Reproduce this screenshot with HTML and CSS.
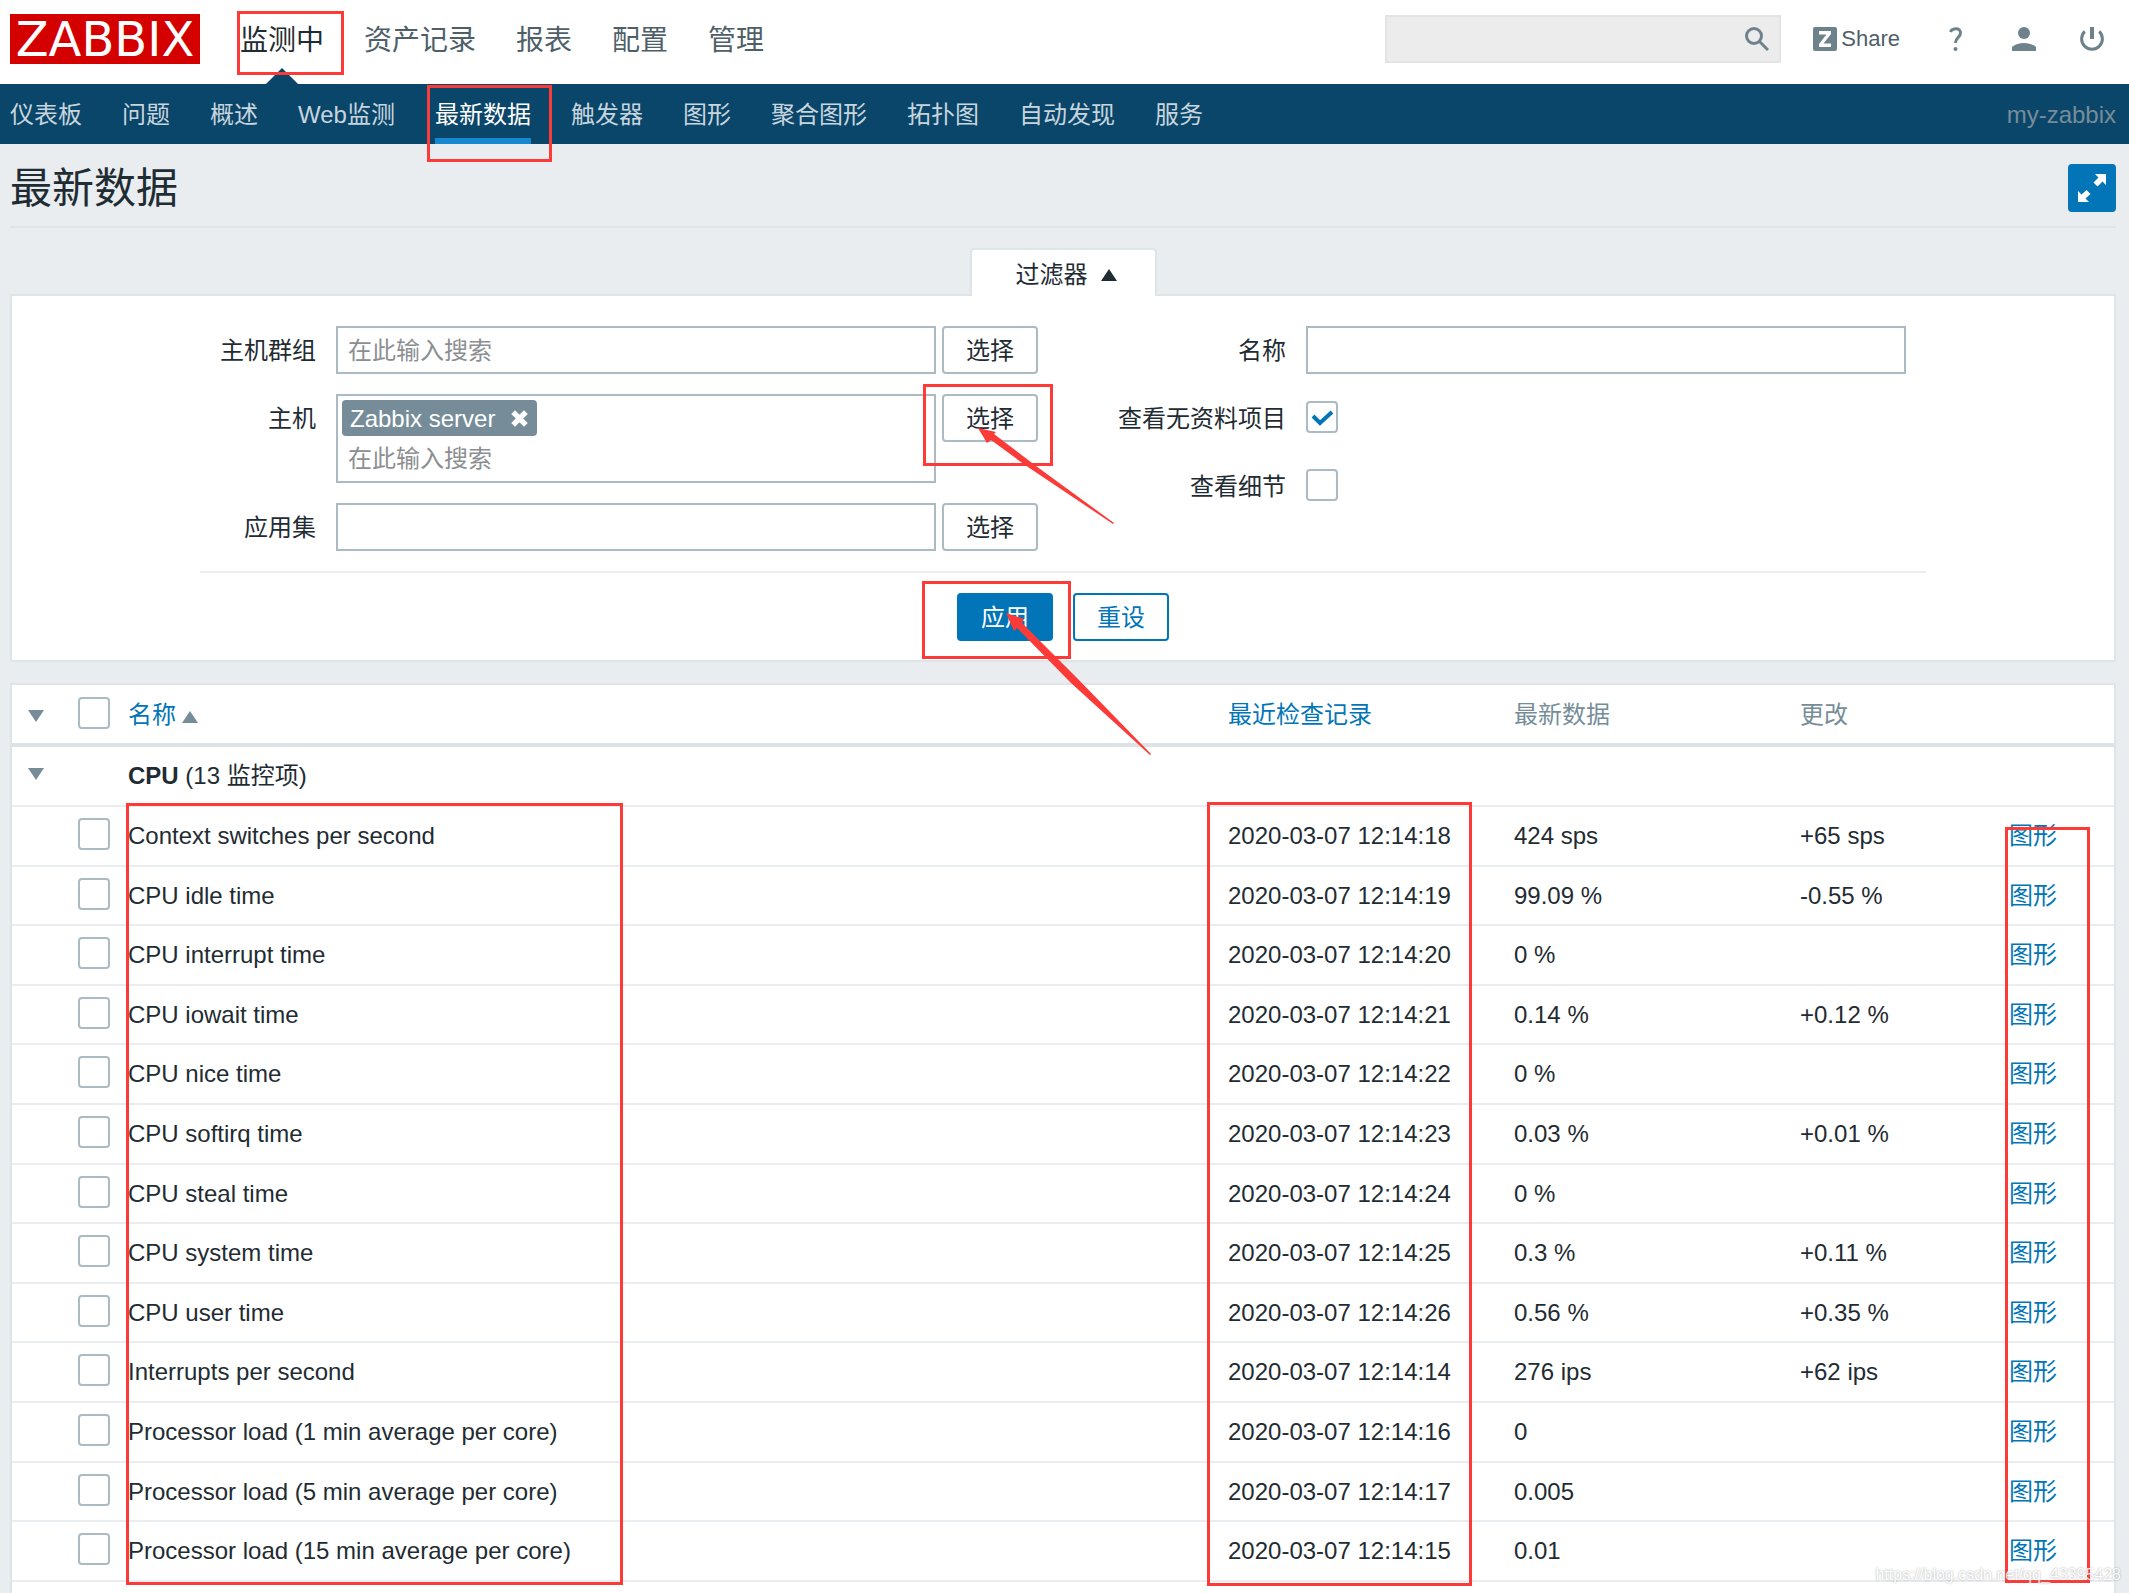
FILE: index.html
```html
<!DOCTYPE html>
<html lang="zh-CN">
<head>
<meta charset="utf-8">
<title>my-zabbix: 最新数据</title>
<link rel="stylesheet" href="styles.css">
</head>
<body>
<header class="top">
  <a class="logo" href="#">ZABBIX</a>
  <nav class="main-menu">
    <a class="active" href="#">监测中</a>
    <a href="#">资产记录</a>
    <a href="#">报表</a>
    <a href="#">配置</a>
    <a href="#">管理</a>
  </nav>
  <form class="search">
    <input type="text" aria-label="搜索">
    <button type="button" aria-label="搜索">
      <svg width="24" height="24" viewBox="0 0 24 24" fill="none" stroke="#6e828c" stroke-width="3"><circle cx="9" cy="9" r="7.5"/><path d="M14 14l9 9"/></svg>
    </button>
  </form>
  <div class="user-menu">
    <a class="share" href="#"><svg width="24" height="24" viewBox="0 0 24 24"><rect width="24" height="24" rx="2" fill="#6e828c"/><path d="M6 4h12v3L10.500 16.500H18V20H6v-3l7.500-9.500H6z" fill="#fff"/></svg>Share</a>
    <a href="#" aria-label="帮助"><svg width="24" height="24" viewBox="0 0 24 24"><path d="M6.500 5C7.500 1.500 16.500-.5 16.500 6c0 4.500-5 4.500-5 10" fill="none" stroke="#6e828c" stroke-width="3"/><circle cx="11.500" cy="22" r="2" fill="#6e828c"/></svg></a>
    <a href="#" aria-label="用户"><svg width="24" height="24" viewBox="0 0 24 24" fill="#6e828c"><circle cx="12" cy="6" r="6"/><path d="M0 24v-4c6-5.500 18-5.500 24 0v4z"/></svg></a>
    <a href="#" aria-label="退出"><svg width="24" height="24" viewBox="0 0 24 24" fill="none" stroke="#6e828c"><path d="M4.800 4.300a10.400 10.400 0 1 0 14.400 0" stroke-width="3"/><path d="M12 0v12" stroke-width="4"/></svg></a>
  </div>
</header>
<nav class="sub-menu">
  <a href="#">仪表板</a>
  <a href="#">问题</a>
  <a href="#">概述</a>
  <a href="#">Web监测</a>
  <a class="active" href="#">最新数据</a>
  <a href="#">触发器</a>
  <a href="#">图形</a>
  <a href="#">聚合图形</a>
  <a href="#">拓扑图</a>
  <a href="#">自动发现</a>
  <a href="#">服务</a>
  <span class="server-name">my-zabbix</span>
</nav>
<main class="page">
  <div class="title-row">
    <h1>最新数据</h1>
    <button class="fullscreen" type="button" aria-label="全屏">
      <svg width="28" height="28" viewBox="0 0 28 28" fill="#fff"><path d="M17 0h11v11l-3.500-3.500-5 5-4-4 5-5zM0 17l3.500 3.500 5-4.500 4 4-5 4.500L11 28H0z"/></svg>
    </button>
  </div>
  <button class="filter-tab" type="button">过滤器<span class="tri up dark"></span></button>
  <form class="filter">
    <div class="filter-form">
      <div class="fields-left">
        <label for="groups">主机群组</label>
        <input class="box" id="groups" type="text" placeholder="在此输入搜索">
        <button class="btn" type="button">选择</button>
        <label for="hosts">主机</label>
        <div class="box multi">
          <span class="chip">Zabbix server<button type="button" aria-label="删除"><svg width="17" height="17" viewBox="0 0 16 16" stroke="#fff" stroke-width="5"><path d="M2 2l12 12M14 2L2 14"/></svg></button></span>
          <input id="hosts" type="text" placeholder="在此输入搜索">
        </div>
        <button class="btn" type="button">选择</button>
        <label for="app">应用集</label>
        <input class="box" id="app" type="text">
        <button class="btn" type="button">选择</button>
      </div>
      <div class="fields-right">
        <label for="name">名称</label>
        <input class="box" id="name" type="text">
        <label for="nodata">查看无资料项目</label>
        <input id="nodata" type="checkbox" checked>
        <label for="details">查看细节</label>
        <input id="details" type="checkbox">
      </div>
    </div>
    <div class="filter-actions">
      <button class="btn primary" type="button">应用</button>
      <button class="btn outline" type="button">重设</button>
    </div>
  </form>
  <div class="panel">
    <table>
      <colgroup><col class="c-toggle"><col class="c-check"><col><col class="c-data"><col class="c-data"><col class="c-change"><col class="c-link"></colgroup>
      <thead>
        <tr><th><button class="toggle" type="button" aria-label="全部折叠"><span class="tri down"></span></button></th><th><input type="checkbox" aria-label="全选"></th><th><a href="#">名称<span class="tri up"></span></a></th><th><a href="#">最近检查记录</a></th><th>最新数据</th><th>更改</th><th></th></tr>
      </thead>
      <tbody>
        <tr><td><button class="toggle" type="button" aria-label="折叠"><span class="tri down"></span></button></td><td></td><td colspan="5"><b>CPU</b> (13 监控项)</td></tr>
        <tr><td></td><td><input type="checkbox" aria-label="Context switches per second"></td><td>Context switches per second</td><td>2020-03-07 12:14:18</td><td>424 sps</td><td>+65 sps</td><td><a href="#">图形</a></td></tr>
        <tr><td></td><td><input type="checkbox" aria-label="CPU idle time"></td><td>CPU idle time</td><td>2020-03-07 12:14:19</td><td>99.09 %</td><td>-0.55 %</td><td><a href="#">图形</a></td></tr>
        <tr><td></td><td><input type="checkbox" aria-label="CPU interrupt time"></td><td>CPU interrupt time</td><td>2020-03-07 12:14:20</td><td>0 %</td><td></td><td><a href="#">图形</a></td></tr>
        <tr><td></td><td><input type="checkbox" aria-label="CPU iowait time"></td><td>CPU iowait time</td><td>2020-03-07 12:14:21</td><td>0.14 %</td><td>+0.12 %</td><td><a href="#">图形</a></td></tr>
        <tr><td></td><td><input type="checkbox" aria-label="CPU nice time"></td><td>CPU nice time</td><td>2020-03-07 12:14:22</td><td>0 %</td><td></td><td><a href="#">图形</a></td></tr>
        <tr><td></td><td><input type="checkbox" aria-label="CPU softirq time"></td><td>CPU softirq time</td><td>2020-03-07 12:14:23</td><td>0.03 %</td><td>+0.01 %</td><td><a href="#">图形</a></td></tr>
        <tr><td></td><td><input type="checkbox" aria-label="CPU steal time"></td><td>CPU steal time</td><td>2020-03-07 12:14:24</td><td>0 %</td><td></td><td><a href="#">图形</a></td></tr>
        <tr><td></td><td><input type="checkbox" aria-label="CPU system time"></td><td>CPU system time</td><td>2020-03-07 12:14:25</td><td>0.3 %</td><td>+0.11 %</td><td><a href="#">图形</a></td></tr>
        <tr><td></td><td><input type="checkbox" aria-label="CPU user time"></td><td>CPU user time</td><td>2020-03-07 12:14:26</td><td>0.56 %</td><td>+0.35 %</td><td><a href="#">图形</a></td></tr>
        <tr><td></td><td><input type="checkbox" aria-label="Interrupts per second"></td><td>Interrupts per second</td><td>2020-03-07 12:14:14</td><td>276 ips</td><td>+62 ips</td><td><a href="#">图形</a></td></tr>
        <tr><td></td><td><input type="checkbox" aria-label="Processor load (1 min average per core)"></td><td>Processor load (1 min average per core)</td><td>2020-03-07 12:14:16</td><td>0</td><td></td><td><a href="#">图形</a></td></tr>
        <tr><td></td><td><input type="checkbox" aria-label="Processor load (5 min average per core)"></td><td>Processor load (5 min average per core)</td><td>2020-03-07 12:14:17</td><td>0.005</td><td></td><td><a href="#">图形</a></td></tr>
        <tr><td></td><td><input type="checkbox" aria-label="Processor load (15 min average per core)"></td><td>Processor load (15 min average per core)</td><td>2020-03-07 12:14:15</td><td>0.01</td><td></td><td><a href="#">图形</a></td></tr>
      </tbody>
    </table>
  </div>
</main>
<div class="mark mark-menu"></div>
<div class="mark mark-submenu"></div>
<div class="mark mark-select"></div>
<div class="mark mark-apply"></div>
<div class="mark mark-names"></div>
<div class="mark mark-times"></div>
<div class="mark mark-graphs"></div>
<svg class="arrows" width="182" height="336" viewBox="0 0 182 336" fill="#fc3a38"><path d="M8 8L26 12L24 14L66 46L144 103L143 104L55 45L21 20L17 23z"/><path d="M36 193L54 199L52 203L107 258L181 334L180 335L101 263L47 208L44 211z"/></svg>
<div class="watermark">https://blog.csdn.net/qq_43395428</div>
</body>
</html>
```
FILE: styles.css
```css
* { box-sizing: border-box; }

body {
  margin: 0;
  position: relative;
  display: flex;
  flex-direction: column;
  min-height: 100vh;
  overflow-x: hidden;
  background: #e9edf0;
  color: #1f2c33;
  font: 24px/32px "Liberation Sans", "Noto Sans CJK SC", sans-serif;
}

a { color: #0275b8; text-decoration: none; }
button, input { font: inherit; color: inherit; margin: 0; }
button { cursor: pointer; }
svg { display: block; }

/* Header */
.top {
  display: flex;
  align-items: center;
  height: 84px;
  padding: 0 25px 6px 10px;
  background: #fff;
}
.logo {
  width: 190px;
  height: 50px;
  background: #d40000;
  color: #fff;
  font: 48px/50px "DejaVu Sans", sans-serif;
  text-align: center;
}
.main-menu { display: flex; gap: 40px; margin-left: 40px; font-size: 28px; line-height: 78px; }
.main-menu a { height: 78px; padding-top: 2px; color: #4f5f69; }
.main-menu .active { position: relative; color: #1f2c33; }
.main-menu .active::after {
  content: "";
  position: absolute;
  left: 50%;
  bottom: -6px;
  transform: translateX(-50%);
  border: 16px solid transparent;
  border-top: 0;
  border-bottom-color: #0a466a;
}
.search { display: flex; width: 396px; height: 48px; margin-left: auto; background: #ececec; border: 2px solid #e4e4e4; }
.search input { flex: 1; min-width: 0; border: 0; background: none; }
.search button { padding: 0 10px; border: 0; background: none; }
.user-menu { display: flex; align-items: center; gap: 44px; margin-left: 32px; font-size: 22px; }
.share { display: flex; gap: 4px; align-items: center; line-height: 24px; color: #4f5f69; }

.sub-menu { display: flex; gap: 40px; height: 60px; padding: 0 13px 0 10px; background: #0a466a; line-height: 62px; }
.sub-menu a { color: #c7d5de; }
.sub-menu .active { color: #fff; box-shadow: inset 0 -6px #1688cf; }
.server-name { margin-left: auto; color: #768d99; }

/* Page */
.page { flex: 1; display: flex; flex-direction: column; padding: 0 13px 0 10px; }
.title-row {
  display: flex;
  align-items: flex-start;
  justify-content: space-between;
  height: 84px;
  padding-top: 20px;
  margin-bottom: 20px;
  border-bottom: 2px solid #dfe4e7;
}
h1 { margin: 0; font-size: 42px; font-weight: 400; line-height: 50px; }
.fullscreen { display: grid; place-items: center; width: 48px; height: 48px; padding: 0; border: 0; border-radius: 4px; background: #0275b8; }

.filter-tab {
  display: flex;
  align-items: center;
  gap: 13px;
  align-self: center;
  height: 48px;
  padding: 4px 38px 0 44px;
  margin-bottom: -2px;
  border: 2px solid #dfe4e7;
  border-bottom: 0;
  border-radius: 4px 4px 0 0;
  background: #fff;
  z-index: 1;
}
.tri { display: inline-block; border: 8px solid transparent; color: #768d99; }
.tri.up { border-top: 0; border-bottom: 12px solid; }
.tri.down { border-bottom: 0; border-top: 12px solid; }
.tri.dark { color: #1f2c33; }

.filter { padding: 30px 20px 19px; border: 2px solid #dfe4e7; background: #fff; }
.filter-form {
  display: grid;
  grid-template-columns: 838fr 888fr;
  max-width: 1726px;
  margin: 0 auto;
  padding-bottom: 20px;
  border-bottom: 2px solid #e9edf0;
}
.fields-left, .fields-right { display: grid; row-gap: 20px; align-items: start; align-content: start; }
.fields-left { grid-template-columns: 116px 1fr 96px; }
.fields-right { grid-template-columns: 248px 1fr; padding-right: 20px; }
.filter label { height: 48px; line-height: 50px; text-align: right; }
.box { height: 48px; min-width: 0; margin-left: 20px; padding: 2px 10px 0; border: 2px solid #acbac2; background: #fff; }
.fields-left .box { margin-right: 6px; }
::placeholder { color: #8c8f91; opacity: 1; }
.multi { height: 89px; padding: 4px; }
.multi input { display: block; width: 100%; height: 40px; padding: 6px 6px 0; border: 0; }
.chip { display: flex; align-items: center; gap: 16px; width: max-content; height: 36px; padding: 1px 9px 0 8px; border-radius: 4px; background: #768d99; color: #fff; }
.chip button { padding: 0; border: 0; background: none; }
.btn { width: 96px; height: 48px; padding: 2px 0 0; border: 2px solid #acbac2; border-radius: 4px; background: #fff; }
.primary { border-color: #0275b8; background: #0275b8; color: #fff; }
.outline { border-color: #0275b8; color: #0275b8; }
.filter-actions { display: flex; justify-content: center; gap: 20px; padding-top: 20px; }

input[type="checkbox"] {
  appearance: none;
  display: block;
  width: 32px;
  height: 32px;
  border: 2px solid #acbac2;
  border-radius: 4px;
  background: #fff;
}
.fields-right input[type="checkbox"] { margin: 7px 0 9px 20px; }
input[type="checkbox"]:checked {
  background: #fff url("data:image/svg+xml,%3Csvg xmlns='http://www.w3.org/2000/svg' viewBox='0 0 28 28'%3E%3Cpath d='M5 13l7 7L24 9' fill='none' stroke='%230275b8' stroke-width='4'/%3E%3C/svg%3E") center / 28px no-repeat;
}

/* Data table */
.panel { flex: 1; margin-top: 21px; border: 2px solid #dfe4e7; border-bottom: 0; background: #fff; }
table { width: 100%; table-layout: fixed; border-collapse: separate; border-spacing: 0; }
.c-toggle { width: 66px; }
.c-check { width: 50px; }
.c-data { width: 286px; }
.c-change { width: 209px; }
.c-link { width: 105px; }
th, td { padding: 0; text-align: left; white-space: nowrap; border-bottom: 2px solid #e9edf0; }
th { height: 62px; padding-top: 2px; border-bottom: 4px solid #dce2e6; font-weight: 400; color: #768d99; }
td { height: 60px; }
tbody tr:nth-child(5n + 3) td, tbody tr:nth-child(5n) td { height: 59px; }
td input[type="checkbox"], th input[type="checkbox"] { margin-bottom: 4px; }
.toggle { display: block; padding: 0 16px; border: 0; background: none; line-height: 12px; }
td .toggle { padding-bottom: 6px; }
th .tri.up { margin-left: 6px; }

/* Annotations drawn over the page */
.mark { position: absolute; border: 3px solid #fc3a38; pointer-events: none; z-index: 2; }
.mark-menu { left: 237px; top: 11px; width: 107px; height: 64px; }
.mark-submenu { left: 427px; top: 85px; width: 125px; height: 77px; }
.mark-select { left: 923px; top: 384px; width: 130px; height: 82px; }
.mark-apply { left: 922px; top: 581px; width: 149px; height: 78px; }
.mark-names { left: 126px; top: 803px; width: 497px; height: 782px; }
.mark-times { left: 1207px; top: 802px; width: 265px; height: 784px; }
.mark-graphs { left: 2005px; top: 827px; width: 85px; height: 756px; }
.arrows { position: absolute; left: 970px; top: 420px; z-index: 2; overflow: visible; pointer-events: none; }
.watermark { position: absolute; right: 8px; bottom: 6px; z-index: 3; color: #fff; font: 16px/24px "Liberation Sans", sans-serif; text-shadow: 0 0 2px #8a8a8a; opacity: .8; pointer-events: none; }
```
